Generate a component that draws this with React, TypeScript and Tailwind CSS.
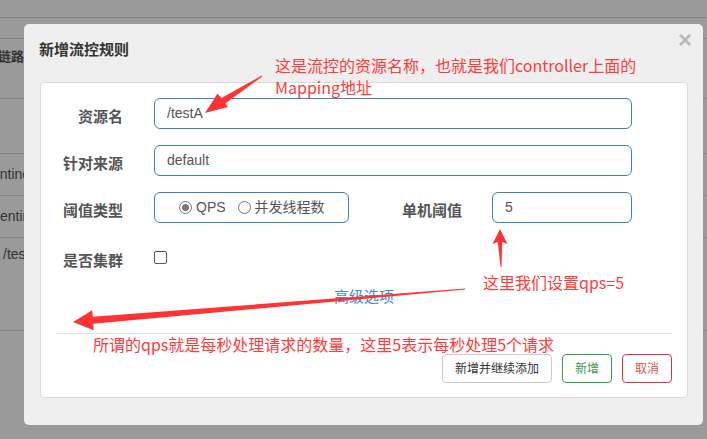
import React from "react";

function Field({ label, children }: { label: string; children?: React.ReactNode }) {
  return (
    <div className="flex items-center h-[31px]">
      <div className="w-[82px] pt-[5px] text-right text-[15px] font-bold text-[#555] leading-none">{label}</div>
      <div className="ml-[31px] flex items-center">{children}</div>
    </div>
  );
}

export default function App() {
  return (
    <div className="relative w-[707px] h-[439px] overflow-hidden bg-[#9a9a9a] font-['Liberation_Sans','Noto_Sans_CJK_SC',sans-serif]">
      {/* background table */}
      <div className="flex flex-col">
        <div className="h-[18px] border-b border-[#858585]" />
        <div className="h-[21px] border-b border-[#858585]" />
        <div className="h-[60px] border-b border-[#858585] overflow-hidden">
          <div className="ml-[-2px] mt-[10px] text-[13px] font-bold text-[#333] leading-[16px] whitespace-nowrap">链路</div>
        </div>
        <div className="h-[55px] border-b border-[#858585]" />
        <div className="h-[42px] border-b border-[#858585] overflow-hidden flex items-center">
          <div className="ml-[-15px] text-[14px] text-[#333] whitespace-nowrap">sentinel</div>
        </div>
        <div className="h-[42px] border-b border-[#858585] overflow-hidden flex items-center">
          <div className="ml-[-7px] text-[14px] text-[#333] whitespace-nowrap">sentinel</div>
        </div>
        <div className="h-[93px] border-b border-[#858585] overflow-hidden">
          <div className="ml-[3px] mt-[6px] text-[14px] text-[#333] whitespace-nowrap">/testA</div>
        </div>
      </div>

      {/* modal */}
      <div className="absolute left-[24px] top-[24px] w-[679px] h-[401px] bg-[#efefef] rounded-[5px] flex flex-col">
        <div className="h-[58px] flex justify-between pl-[15px] pr-[11px]">
          <div className="pt-[16px] text-[15px] leading-[20px] font-bold text-[#333]">新增流控规则</div>
          <div className="pt-[3px] text-[24px] leading-[26px] font-bold text-[#b8b8b8]">×</div>
        </div>
        <div className="ml-[16px] mr-[15px] h-[316px] bg-white border border-[#dcdcdc] rounded-[4px] flex flex-col pt-[15px]">
          <Field label="资源名">
            <div className="w-[478px] h-[31px] border border-[#3d7ebf] rounded-[6px] flex items-center px-[12px] text-[14px] text-[#555]">/testA</div>
          </Field>
          <div className="mt-[16px]">
            <Field label="针对来源">
              <div className="w-[478px] h-[31px] border border-[#3d7ebf] rounded-[6px] flex items-center px-[12px] text-[14px] text-[#555]">default</div>
            </Field>
          </div>
          <div className="mt-[16px] flex items-center h-[31px]">
            <div className="w-[82px] pt-[5px] text-right text-[15px] font-bold text-[#555] leading-none">阈值类型</div>
            <div className="ml-[31px] w-[195px] h-[31px] border border-[#3d7ebf] rounded-[6px] flex items-center pl-[24px] text-[14px] text-[#555]">
              <span className="w-[13px] h-[13px] rounded-full border border-[#777] flex items-center justify-center">
                <span className="w-[7px] h-[7px] rounded-full bg-[#777]" />
              </span>
              <span className="ml-[4px]">QPS</span>
              <span className="ml-[12px] w-[13px] h-[13px] rounded-full border border-[#777]" />
              <span className="ml-[4px]">并发线程数</span>
            </div>
            <div className="w-[113px] pt-[5px] text-right text-[15px] font-bold text-[#555] leading-none">单机阈值</div>
            <div className="ml-[30px] w-[140px] h-[31px] border border-[#3d7ebf] rounded-[6px] flex items-center px-[12px] text-[14px] text-[#555]">5</div>
          </div>
          <div className="mt-[19px]">
            <Field label="是否集群">
              <span className="w-[13px] h-[13px] border border-[#555] rounded-[2px] bg-white" />
            </Field>
          </div>
          <div className="mt-[14px] text-center text-[15px] leading-[20px] text-[#428bca]">高级选项</div>
          <div className="mt-[26px] mx-[15px] border-t border-[#e5e5e5]" />
          <div className="mt-[20px] flex justify-end gap-[10px] pr-[15px]">
            <button className="h-[29px] px-[12px] text-[12px] text-[#333] bg-white border border-[#ccc] rounded-[4px]">新增并继续添加</button>
            <button className="h-[29px] w-[50px] text-[12px] text-[#3c9a55] bg-white border border-[#2ea44f] rounded-[4px]">新增</button>
            <button className="h-[29px] w-[50px] text-[12px] text-[#d9534f] bg-white border border-[#dc3545] rounded-[4px]">取消</button>
          </div>
        </div>
      </div>

      {/* annotations */}
      <div className="absolute left-[275px] top-[54px] text-[16px] leading-[22px] text-[#ff3b3b] font-['Noto_Sans_CJK_SC',sans-serif] whitespace-nowrap">
        <div>这是流控的资源名称，也就是我们controller上面的</div>
        <div>Mapping地址</div>
      </div>
      <div className="absolute left-[483px] top-[271px] text-[16px] leading-[22px] text-[#ff3b3b] font-['Noto_Sans_CJK_SC',sans-serif] whitespace-nowrap">这里我们设置qps=5</div>
      <div className="absolute left-[93px] top-[333px] text-[16px] leading-[22px] text-[#ff3b3b] font-['Noto_Sans_CJK_SC',sans-serif] whitespace-nowrap">所谓的qps就是每秒处理请求的数量，这里5表示每秒处理5个请求</div>

      <svg className="absolute left-0 top-0" width="707" height="439" viewBox="0 0 707 439">
        <polygon fill="#ff3333" points="205,113 228,107 225.3,103.5 262.3,76.4 261.7,75.6 221.5,98 217.5,93.5" />
        <polygon fill="#ff3333" points="500,229 507.5,244 502.2,242 501.5,267 500.5,267 497.8,242 492.5,244" />
        <polygon fill="#ff3333" points="73,322 93.6,330.3 93.3,323.8 465,289.5 465,288.5 92.7,316.8 92.2,310.3" />
      </svg>
    </div>
  );
}
